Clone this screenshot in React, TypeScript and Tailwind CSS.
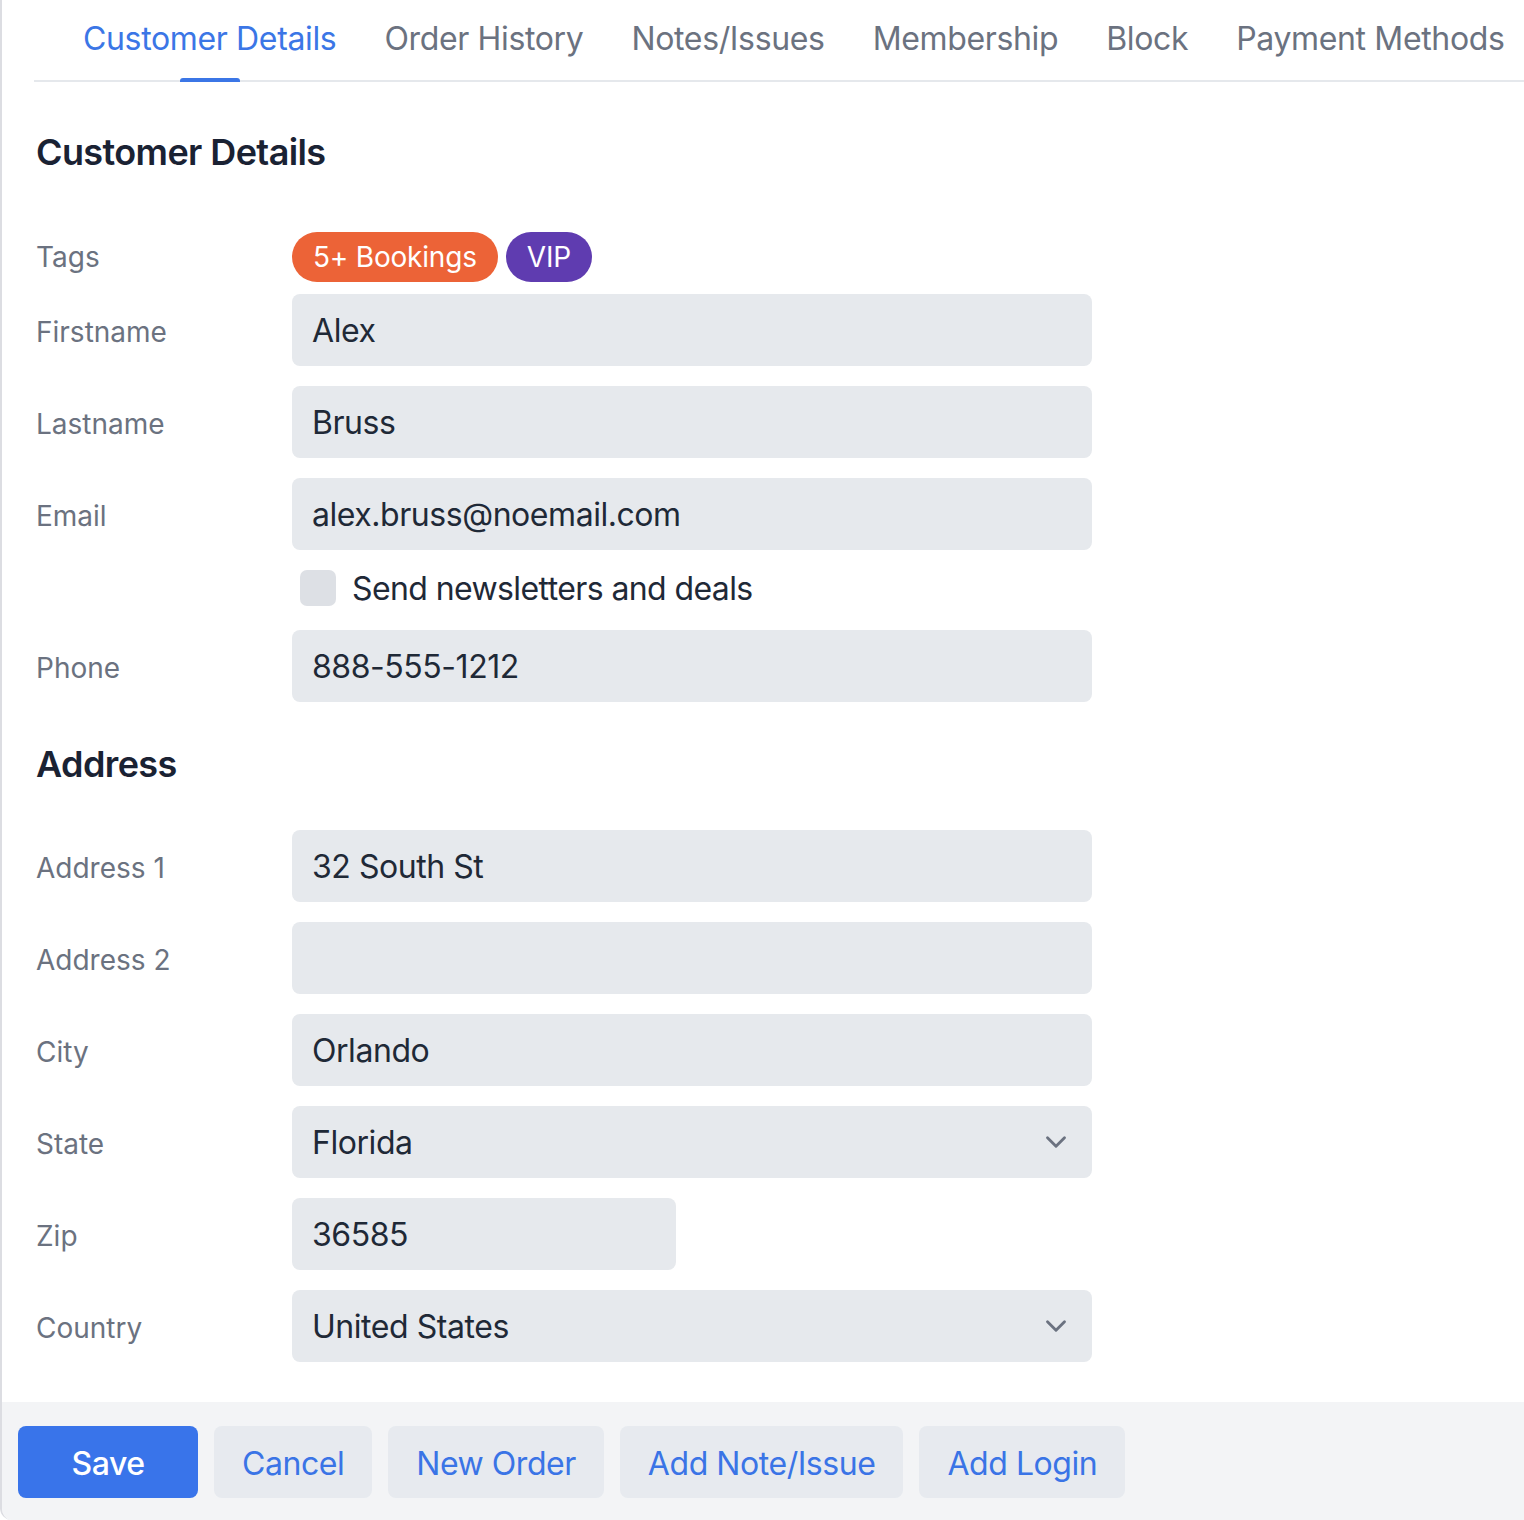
import { ChevronDown } from 'lucide-react';

const tabs = ['Customer Details', 'Order History', 'Notes/Issues', 'Membership', 'Block', 'Payment Methods'];

function Field({ label, value, short, select }: { label: string; value?: string; short?: boolean; select?: boolean }) {
  return (
    <div className="flex items-center">
      <div className="w-[256px] shrink-0 text-[28px] text-[#6b7280] mt-[3px]">{label}</div>
      <div
        className={`${short ? 'w-[384px]' : 'w-[800px]'} h-[72px] rounded-[8px] bg-[#e6e9ed] pl-[20px] pr-[21px] flex items-center justify-between text-[32px] tracking-[-0.45px] text-[#1f2937]`}
      >
        <span className="mt-[1px]">{value}</span>
        {select && <ChevronDown className="text-[#6b7280] mr-[-2px]" size={34} strokeWidth={2} />}
      </div>
    </div>
  );
}

export default function App() {
  return (
    <div className="min-h-[1520px] w-[1524px] bg-white font-['Inter',sans-serif] antialiased">
      <div className="border-l-2 border-[#dcdde2] rounded-bl-[12px] overflow-hidden flex flex-col min-h-[1520px]">
        {/* Tabs */}
        <div className="ml-[32px] border-b-2 border-[#e5e8ec] flex pl-[25px] h-[82px]">
          {tabs.map((t, i) => (
            <div key={t} className="relative px-[24px] flex items-center h-full pb-[2px]">
              <span className={`text-[32px] tracking-[-0.35px] whitespace-nowrap ${i === 0 ? 'text-[#3b76e6]' : 'text-[#6b7280]'}`}>{t}</span>
              {i === 0 && (
                <div className="absolute bottom-[-2px] left-1/2 -translate-x-1/2 w-[60px] h-[4px] rounded-t-[3px] bg-[#3b76e6]" />
              )}
            </div>
          ))}
        </div>

        <div className="pl-[34px] flex-1 pb-[40px]">
          <h2 className="mt-[48px] h-[44px] leading-[44px] text-[36px] font-semibold text-[#1a2233] tracking-[-0.6px]">Customer Details</h2>

          <div className="mt-[58px] flex items-center">
            <div className="w-[256px] shrink-0 text-[28px] text-[#6b7280]">Tags</div>
            <div className="flex gap-[8px]">
              <span className="h-[50px] rounded-full bg-[#ec6337] text-white text-[28px] tracking-[-0.2px] px-[21px] flex items-center">5+ Bookings</span>
              <span className="h-[50px] rounded-full bg-[#5f3cb0] text-white text-[28px] tracking-[-0.2px] px-[21px] flex items-center">VIP</span>
            </div>
          </div>

          <div className="mt-[12px] flex flex-col gap-[20px]">
            <Field label="Firstname" value="Alex" />
            <Field label="Lastname" value="Bruss" />
            <Field label="Email" value="alex.bruss@noemail.com" />
          </div>

          <div className="flex items-center mt-[20px] ml-[264px] h-[36px]">
            <div className="w-[36px] h-[36px] rounded-[7px] bg-[#dde0e5]" />
            <span className="ml-[16px] text-[32px] tracking-[-0.6px] text-[#1f2937] mt-[1px]">Send newsletters and deals</span>
          </div>

          <div className="mt-[24px]">
            <Field label="Phone" value="888-555-1212" />
          </div>

          <h2 className="mt-[40px] h-[44px] leading-[44px] text-[36px] font-semibold text-[#1a2233] tracking-[-0.6px]">Address</h2>

          <div className="mt-[44px] flex flex-col gap-[20px]">
            <Field label="Address 1" value="32 South St" />
            <Field label="Address 2" value="" />
            <Field label="City" value="Orlando" />
            <Field label="State" value="Florida" select />
            <Field label="Zip" value="36585" short />
            <Field label="Country" value="United States" select />
          </div>
        </div>

        {/* Footer */}
        <div className="bg-[#f3f4f6] pt-[24px] pb-[22px] px-[16px] flex gap-[16px] text-[32px] tracking-[-0.45px]">
          <button className="h-[72px] w-[180px] pt-[3px] rounded-[8px] bg-[#3974ea] text-white font-medium">Save</button>
          <button className="h-[72px] px-[28px] pt-[3px] rounded-[8px] bg-[#e7eaef] text-[#3a74e6]">Cancel</button>
          <button className="h-[72px] px-[28px] pt-[3px] rounded-[8px] bg-[#e7eaef] text-[#3a74e6]">New Order</button>
          <button className="h-[72px] px-[28px] pt-[3px] rounded-[8px] bg-[#e7eaef] text-[#3a74e6]">Add Note/Issue</button>
          <button className="h-[72px] px-[28px] pt-[3px] rounded-[8px] bg-[#e7eaef] text-[#3a74e6]">Add Login</button>
        </div>
      </div>
    </div>
  );
}
